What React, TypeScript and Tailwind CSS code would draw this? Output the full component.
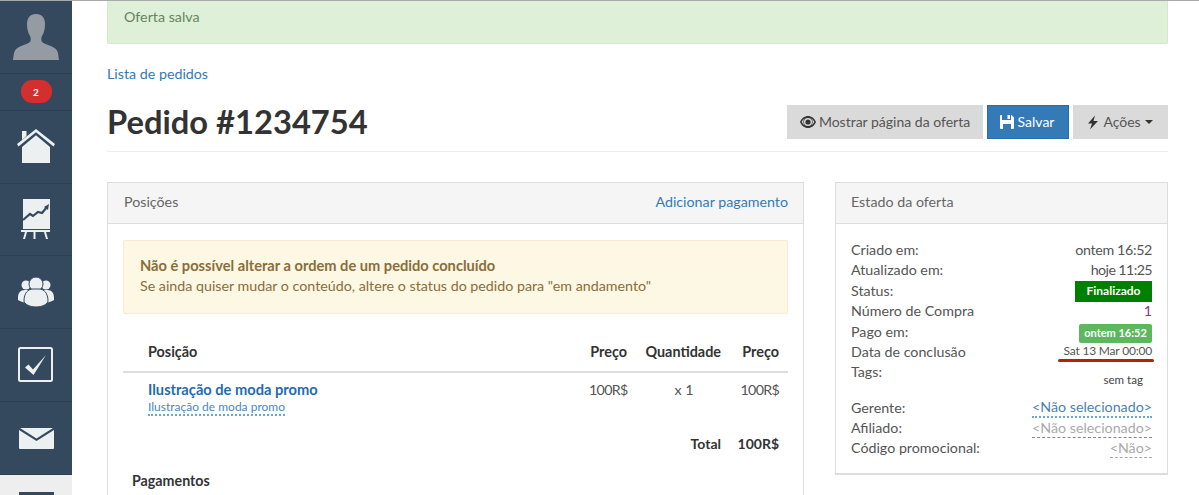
import React from "react";

const Row = ({ label, children, h = "h-[20px]" }: { label: string; children: React.ReactNode; h?: string }) => (
  <div className={`flex justify-between items-center ${h}`}>
    <span>{label}</span>
    {children}
  </div>
);

const NavCell = ({ children, h = "h-[73px]" }: { children: React.ReactNode; h?: string }) => (
  <div className={`${h} flex items-center justify-center border-b border-[#2c3e50]`}>{children}</div>
);

export default function App() {
  return (
    <div className="w-[1199px] h-[495px] overflow-hidden flex bg-white border-t border-[#a9a9a9] text-[14.25px] leading-[20px] text-[#555555] font-['Lato','Open_Sans',sans-serif]">
      <aside className="w-[72px] shrink-0 bg-[#34495e] flex flex-col">
        <NavCell h="h-[73px]">
          <svg width="48" height="46" viewBox="0 0 48 46" fill="#959ba3">
            <path d="M24 0c-6 0-9 4-9 10 0 5 1 9 3 12 1 2 1 4 0 6-3 3-15 4-16 11-.5 3-1 7-1 7h46s-.5-4-1-7c-1-7-13-8-16-11-1-2-1-4 0-6 2-3 3-7 3-12 0-6-3-10-9-10z" />
          </svg>
        </NavCell>
        <NavCell h="h-[37px]">
          <span className="w-[31px] h-[23px] rounded-[11px] bg-[#d32f2f] text-white text-[10px] font-bold flex items-center justify-center">2</span>
        </NavCell>
        <NavCell>
          <svg width="38" height="36" viewBox="0 0 38 36" fill="#ecf0f1">
            <path d="M5 2h4.500v5L5 11z" />
            <path d="M19 0 38 15 36.500 17.500 19 3.200 1.500 17.500 0 15z" />
            <path d="M5 18 19 6.200 33 18v16H5z" />
          </svg>
        </NavCell>
        <NavCell>
          <svg width="30" height="41" viewBox="0 0 30 41">
            <path fill="#ecf0f1" d="M2 0h27v30H2z" />
            <path fill="none" stroke="#34495e" strokeWidth="2.200" d="M2 21l7-6 3 2 5-4 4 1 5-6" />
            <path fill="#34495e" d="M28 5l-1 6-4-3z" />
            <path fill="#ecf0f1" d="M0 31h29v2H0zM4 33h2l-2 7H2zM12.500 33h2v7h-2zM23 33h2l2 7h-2z" />
          </svg>
        </NavCell>
        <NavCell>
          <svg width="36" height="32" viewBox="0 0 36 32" fill="#ecf0f1">
            <circle cx="8" cy="9" r="4.500" />
            <circle cx="28" cy="9" r="4.500" />
            <path d="M0 22c0-5 2-8 7-8h3l2 8v5c-5 0-9-1-12-3zM36 22c0-5-2-8-7-8h-3l-2 8v5c5 0 9-1 12-3z" />
            <circle cx="18" cy="8" r="7" stroke="#34495e" strokeWidth="1" />
            <path d="M6 25c0-8 4-12 9-12h6c5 0 9 4 9 12 0 3-6 6-12 6s-12-3-12-6z" stroke="#34495e" strokeWidth="1" />
          </svg>
        </NavCell>
        <NavCell>
          <svg className="-mt-[2px] -ml-[1px]" width="35" height="35" viewBox="0 0 35 35" fill="none">
            <rect x="1" y="1" width="33" height="33" rx="1.500" stroke="#ecf0f1" strokeWidth="2" />
            <path d="M7 20.500 10.500 17.500 15 22.500 28 8 15.500 28z" fill="#ecf0f1" />
          </svg>
        </NavCell>
        <NavCell>
          <svg width="35" height="21" viewBox="0 0 35 21" fill="#ecf0f1">
            <path d="M1 0h33L17.500 10.500z" />
            <path d="M0 2v18a1 1 0 0 0 1 1h33a1 1 0 0 0 1-1V2L17.500 13z" />
          </svg>
        </NavCell>
        <div className="flex-1 bg-[#eeeeee] flex justify-center pt-[17px]">
          <div className="w-[35px] h-[3px] bg-[#34495e]" />
        </div>
      </aside>

      <main className="flex-1 pl-[35px] pr-[31px]">
        <div className="h-[43px] bg-[#dff0d8] border border-t-0 border-[#d6e9c6] rounded-b-[2px] px-[16px] pt-[6px] text-[#65845b]">Oferta salva</div>

        <div className="mt-[20px] h-[20px] text-[#337ab7]">Lista de pedidos</div>

        <div className="mt-[11px] h-[54px] flex items-center justify-between border-b border-[#eeeeee] pb-[2px] box-content">
          <h1 className="text-[32.7px] leading-[36px] font-bold text-[#333333]">Pedido #1234754</h1>
          <div className="flex gap-[4px] h-[34px] text-[14px]">
            <button className="w-[196px] bg-[#dadada] flex items-center justify-center gap-[3px] text-[#555555]">
              <svg width="16" height="12" viewBox="0 0 16 12" fill="#333">
                <path fillRule="evenodd" d="M8 0c3.500 0 6.500 2.200 8 6-1.500 3.800-4.500 6-8 6S1.500 9.800 0 6c1.500-3.800 4.500-6 8-6zm0 2a4 4 0 1 0 0 8 4 4 0 0 0 0-8zM1.700 6C2.500 7.500 3.500 8.700 4.800 9.400 3.900 8.500 3.400 7.300 3.400 6s.5-2.500 1.400-3.400C3.500 3.300 2.500 4.500 1.700 6zm9.500-3.400c.9.900 1.400 2.100 1.400 3.400s-.5 2.500-1.400 3.400c1.300-.7 2.300-1.900 3.100-3.400-.8-1.500-1.800-2.700-3.100-3.400z" />
                <circle cx="8" cy="6" r="2.600" />
              </svg>
              Mostrar página da oferta
            </button>
            <button className="w-[82px] bg-[#337ab7] border border-[#2e6da4] flex items-center justify-center gap-[4px] text-white pr-[2px]">
              <svg width="14" height="14" viewBox="0 0 14 14" fill="#fff">
                <path fillRule="evenodd" d="M0 1a1 1 0 0 1 1-1h1v5h9V0h.5L14 2.500V13a1 1 0 0 1-1 1H1a1 1 0 0 1-1-1zM3 9v5h8V9z" />
                <path d="M7.500 0H10v4H7.500z" />
              </svg>
              Salvar
            </button>
            <button className="w-[95px] bg-[#dadada] flex items-center justify-center gap-[5px] text-[#555555]">
              <svg width="10" height="15" viewBox="0 0 10 14" fill="#333">
                <path d="M7 0 0 8h4l-2 6 8-8.500H5.500z" />
              </svg>
              Ações
              <span className="w-0 h-0 -ml-[1px] border-x-[4px] border-x-transparent border-t-[4px] border-t-[#333333]" />
            </button>
          </div>
        </div>

        <div className="mt-[30px] flex items-start justify-between">
          <section className="w-[697px] h-[320px] border border-[#dddddd] border-b-0">
            <header className="h-[41px] bg-[#f5f5f5] border-b border-[#dddddd] flex items-center justify-between pl-[16px] pr-[15px] pb-[2px] text-[#666666]">
              <span>Posições</span>
              <span className="text-[#337ab7]">Adicionar pagamento</span>
            </header>
            <div className="px-[15px] pt-[16px]">
              <div className="h-[74px] bg-[#fcf8e3] border border-[#faebcc] rounded-[2px] px-[16px] pt-[15px] text-[#8a6d3b]">
                <div className="font-bold text-[14.65px]">Não é possível alterar a ordem de um pedido concluído</div>
                <div>Se ainda quiser mudar o conteúdo, altere o status do pedido para "em andamento"</div>
              </div>

              <div className="mt-[23px] h-[36px] flex items-center border-b-2 border-[#dddddd] font-bold text-[14.4px] text-[#333333] pl-[25px] pr-[9px] pb-[5px]">
                <span className="flex-1">Posição</span>
                <span className="w-[38px] text-right">Preço</span>
                <span className="w-[94px] text-right">Quantidade</span>
                <span className="w-[58px] text-right">Preço</span>
              </div>

              <div className="flex pl-[25px] pr-[9px] pt-[7px] h-[57px]">
                <div className="flex-1">
                  <div className="font-bold text-[#1f6cb0] text-[14.65px]">Ilustração de moda promo</div>
                  <span className="text-[12px] leading-[15px] block w-fit -mt-[1px] text-[#4f86c0] border-b-2 border-dotted border-[#6aa5d8]">Ilustração de moda promo</span>
                </div>
                <span className="w-[38px] text-right tracking-[-0.7px]">100R$</span>
                <span className="w-[94px] text-center pl-[20px]">x 1</span>
                <span className="w-[58px] text-right tracking-[-0.7px]">100R$</span>
              </div>

              <div className="flex justify-end font-bold text-[#333333] text-[14px] pr-[9px] mt-[4px]">
                <span>Total</span>
                <span className="w-[58px] text-right">100R$</span>
              </div>

              <div className="mt-[17px] pl-[9px] font-bold text-[#333333]">Pagamentos</div>
            </div>
          </section>

          <section className="w-[333px] h-[293px] border border-[#dddddd] border-b-2">
            <header className="h-[41px] bg-[#f5f5f5] border-b border-[#dddddd] flex items-center px-[15px] pb-[2px] text-[#666666]">Estado da oferta</header>
            <div className="px-[15px] pt-[16px]">
              <Row label="Criado em:"><span className="tracking-[-0.35px]">ontem 16:52</span></Row>
              <Row label="Atualizado em:"><span className="tracking-[-0.6px]">hoje 11:25</span></Row>
              <Row label="Status:" h="h-[21px]">
                <span className="w-[77px] h-[21px] mt-[1px] bg-[#008000] text-white text-[12px] font-bold flex items-center justify-center">Finalizado</span>
              </Row>
              <Row label="Número de Compra"><span className="text-[#7a3e8f]">1</span></Row>
              <Row label="Pago em:" h="h-[21px]">
                <span className="w-[73px] h-[19px] mt-[3px] bg-[#5cb85c] rounded-[2px] text-white text-[11px] font-bold flex items-center justify-center">ontem 16:52</span>
              </Row>
              <div className="relative">
                <Row label="Data de conclusão"><span className="text-[12px] tracking-[-0.2px] -mt-[3px]">Sat 13 Mar 00:00</span></Row>
                <div className="absolute right-[-2px] top-[17px] w-[96px] h-[3px] rounded-full bg-[#b82000]" />
              </div>
              <div className="flex justify-between h-[36px]">
                <span>Tags:</span>
                <span className="text-[11.6px] text-[#444444] pt-[8px] pr-[9px]">sem tag</span>
              </div>
              <Row label="Gerente:"><span className="text-[#4b7fb5] border-b-2 border-dotted border-[#6aa5d8] leading-[18px]">&lt;Não selecionado&gt;</span></Row>
              <Row label="Afiliado:"><span className="text-[#aaaaaa] border-b border-dashed border-[#888888] leading-[18px]">&lt;Não selecionado&gt;</span></Row>
              <Row label="Código promocional:"><span className="text-[#aaaaaa] border-b border-dashed border-[#aaaaaa] leading-[18px]">&lt;Não&gt;</span></Row>
            </div>
          </section>
        </div>
      </main>
    </div>
  );
}
